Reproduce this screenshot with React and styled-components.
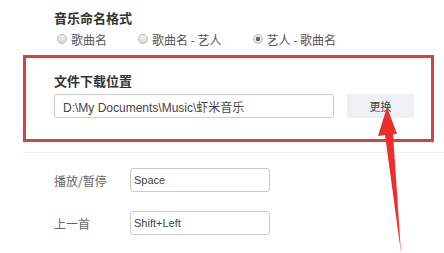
import React from 'react';
import styled, { createGlobalStyle } from 'styled-components';

const GlobalStyle = createGlobalStyle`
  html, body {
    margin: 0;
    padding: 0;
    background: #fff;
    overflow: hidden;
  }
  body {
    font-family: "Noto Sans CJK SC", "Liberation Sans", sans-serif;
    color: #333;
  }
`;

const namingOptions = [
  { label: '歌曲名', checked: false },
  { label: '歌曲名 - 艺人', checked: false },
  { label: '艺人 - 歌曲名', checked: true },
];

const hotkeys = [
  { label: '播放/暂停', value: 'Space' },
  { label: '上一首', value: 'Shift+Left' },
];

const App = () => (
  <>
    <GlobalStyle />
    <Page>
      <Section>
        <Title>音乐命名格式</Title>
        <RadioRow>
          {namingOptions.map((opt) => (
            <RadioItem key={opt.label}>
              <Radio checked={opt.checked} />
              {opt.label}
            </RadioItem>
          ))}
        </RadioRow>
      </Section>

      <HighlightBox>
        <Title>文件下载位置</Title>
        <PathRow>
          <PathInput>D:\My Documents\Music\虾米音乐</PathInput>
          <ChangeButton>更换</ChangeButton>
        </PathRow>
      </HighlightBox>

      <Divider />

      <HotkeyList>
        {hotkeys.map((key) => (
          <HotkeyRow key={key.label}>
            <HotkeyLabel>{key.label}</HotkeyLabel>
            <HotkeyInput>{key.value}</HotkeyInput>
          </HotkeyRow>
        ))}
        <HotkeyRow>
          <HotkeyLabel />
          <HotkeyInput />
        </HotkeyRow>
      </HotkeyList>

      <Arrow viewBox="0 0 444 253" width="444" height="253">
        <polygon
          points="387,107 378,136 385,135 401,253 393,134 397,134"
          fill="#ec2f2c"
        />
      </Arrow>
    </Page>
  </>
);

export default App;

const Page = styled.div`
  position: relative;
  width: 444px;
  height: 253px;
  overflow: hidden;
  padding: 9px 10px 0 23px;
  box-sizing: border-box;
`;

const Section = styled.div`
  padding-left: 31px;
  height: 46px;
`;

const Title = styled.div`
  font-size: 13px;
  line-height: 18px;
  font-weight: bold;
  color: #333;
`;

const RadioRow = styled.div`
  display: flex;
  align-items: center;
  margin-top: 3px;
  padding-left: 3px;
  height: 18px;
`;

const RadioItem = styled.label`
  display: flex;
  align-items: center;
  gap: 4px;
  font-size: 12px;
  color: #555;
  margin-right: 31px;
`;

const Radio = styled.span`
  width: 8px;
  height: 8px;
  border-radius: 50%;
  border: 1px solid #bbb;
  background: ${(p) =>
    p.checked
      ? 'radial-gradient(circle, #666 0 2px, #e6e6e6 2.5px)'
      : 'linear-gradient(#f2f2f2, #d8d8d8)'};
`;

const HighlightBox = styled.div`
  border: 3px solid #d9403e;
  height: 87px;
  box-sizing: border-box;
  padding: 14px 0 0 28px;
`;

const PathRow = styled.div`
  display: flex;
  align-items: center;
  gap: 13px;
  margin-top: 4px;
`;

const PathInput = styled.div`
  width: 280px;
  height: 24px;
  box-sizing: border-box;
  border: 1px solid #ccc;
  border-radius: 3px;
  padding-left: 8px;
  display: flex;
  align-items: center;
  font-family: "Liberation Sans", "Noto Sans CJK SC", sans-serif;
  font-size: 12px;
  color: #444;
`;

const ChangeButton = styled.div`
  width: 67px;
  height: 24px;
  background: #eef1f4;
  display: flex;
  align-items: center;
  justify-content: center;
  font-size: 11px;
  color: #444;
`;

const Divider = styled.div`
  height: 1px;
  background: #f0f0f0;
  margin: 10px -10px 0 0;
`;

const HotkeyList = styled.div`
  display: flex;
  flex-direction: column;
  gap: 19px;
  padding: 15px 0 0 31px;
`;

const HotkeyRow = styled.div`
  display: flex;
  align-items: center;
`;

const HotkeyLabel = styled.div`
  width: 76px;
  font-size: 12px;
  color: #666;
`;

const HotkeyInput = styled.div`
  width: 140px;
  height: 24px;
  box-sizing: border-box;
  border: 1px solid #ccc;
  border-radius: 3px;
  padding-left: 3px;
  display: flex;
  align-items: center;
  font-family: "Liberation Sans", sans-serif;
  font-size: 11px;
  color: #444;
`;

const Arrow = styled.svg`
  position: absolute;
  left: 0;
  top: 0;
  pointer-events: none;
`;
